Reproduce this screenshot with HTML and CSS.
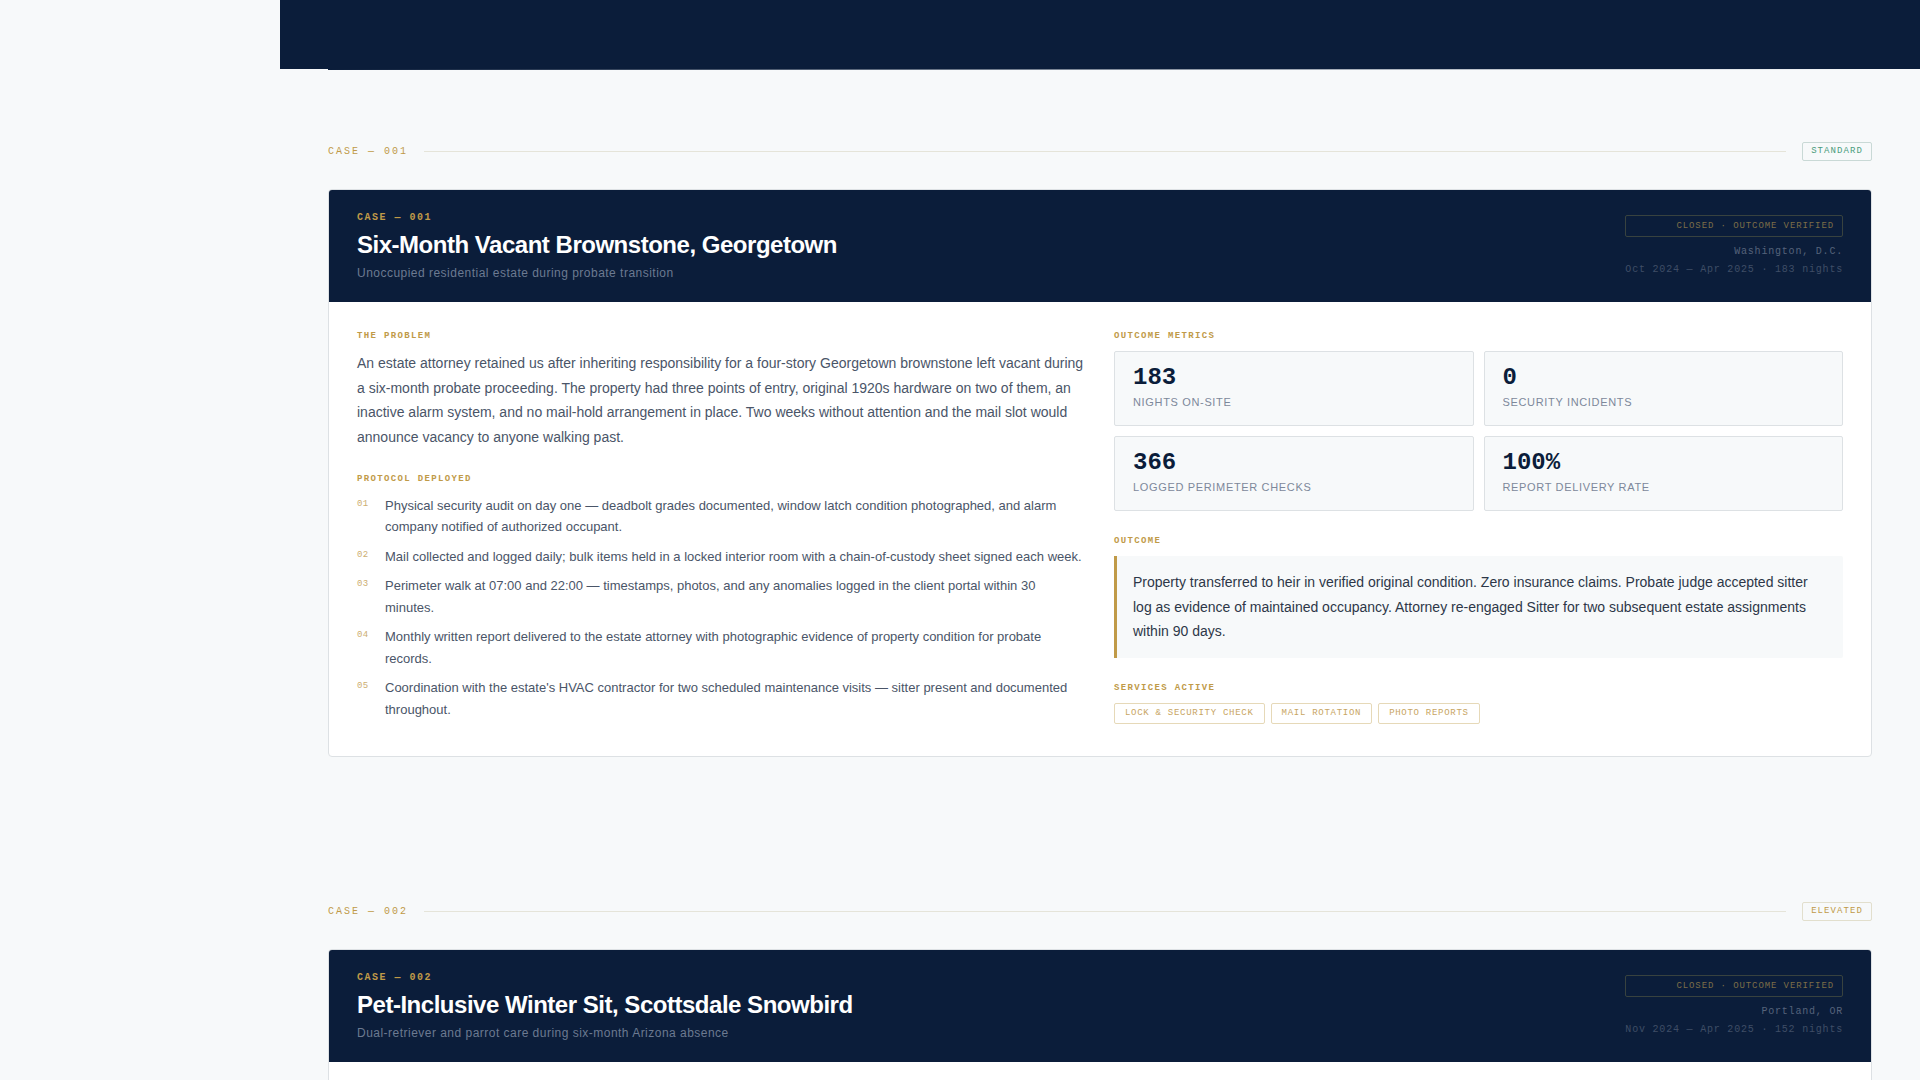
FILE: index.html
```html
<!DOCTYPE html>
<html lang="en">
<head>
<meta charset="utf-8">
<meta name="viewport" content="width=device-width, initial-scale=1">
<title>Case Files</title>
<link rel="stylesheet" href="styles.css">
</head>
<body>
<main class="page">
  <div class="hero"></div>

  <section class="case case-first">
    <div class="case-bar">
      <span class="case-index">CASE — 001</span>
      <span class="case-rule"></span>
      <span class="tier tier-standard">STANDARD</span>
    </div>
    <article class="card">
      <header class="card-head">
        <div class="card-intro">
          <p class="card-number">CASE — 001</p>
          <h2 class="card-title">Six-Month Vacant Brownstone, Georgetown</h2>
          <p class="card-sub">Unoccupied residential estate during probate transition</p>
        </div>
        <div class="card-meta">
          <p class="status">CLOSED · OUTCOME VERIFIED</p>
          <p class="place">Washington, D.C.</p>
          <p class="dates">Oct 2024 — Apr 2025 · 183 nights</p>
        </div>
      </header>
      <div class="card-body">
        <div class="column">
          <section class="block">
            <h3 class="label">THE PROBLEM</h3>
            <p class="problem">An estate attorney retained us after inheriting responsibility for a four-story Georgetown brownstone left vacant during a six-month probate proceeding. The property had three points of entry, original 1920s hardware on two of them, an inactive alarm system, and no mail-hold arrangement in place. Two weeks without attention and the mail slot would announce vacancy to anyone walking past.</p>
          </section>
          <section class="block">
            <h3 class="label">PROTOCOL DEPLOYED</h3>
            <ol class="steps">
              <li class="step"><span class="step-no">01</span><span>Physical security audit on day one — deadbolt grades documented, window latch condition photographed, and alarm company notified of authorized occupant.</span></li>
              <li class="step"><span class="step-no">02</span><span>Mail collected and logged daily; bulk items held in a locked interior room with a chain-of-custody sheet signed each week.</span></li>
              <li class="step"><span class="step-no">03</span><span>Perimeter walk at 07:00 and 22:00 — timestamps, photos, and any anomalies logged in the client portal within 30 minutes.</span></li>
              <li class="step"><span class="step-no">04</span><span>Monthly written report delivered to the estate attorney with photographic evidence of property condition for probate records.</span></li>
              <li class="step"><span class="step-no">05</span><span>Coordination with the estate's HVAC contractor for two scheduled maintenance visits — sitter present and documented throughout.</span></li>
            </ol>
          </section>
        </div>
        <div class="column">
          <section class="block">
            <h3 class="label">OUTCOME METRICS</h3>
            <dl class="metrics">
              <div class="metric"><dd class="metric-value">183</dd><dt class="metric-name">NIGHTS ON-SITE</dt></div>
              <div class="metric"><dd class="metric-value">0</dd><dt class="metric-name">SECURITY INCIDENTS</dt></div>
              <div class="metric"><dd class="metric-value">366</dd><dt class="metric-name">LOGGED PERIMETER CHECKS</dt></div>
              <div class="metric"><dd class="metric-value">100%</dd><dt class="metric-name">REPORT DELIVERY RATE</dt></div>
            </dl>
          </section>
          <section class="block">
            <h3 class="label">OUTCOME</h3>
            <p class="outcome">Property transferred to heir in verified original condition. Zero insurance claims. Probate judge accepted sitter log as evidence of maintained occupancy. Attorney re-engaged Sitter for two subsequent estate assignments within 90 days.</p>
          </section>
          <section class="block">
            <h3 class="label">SERVICES ACTIVE</h3>
            <ul class="services">
              <li class="service">LOCK &amp; SECURITY CHECK</li>
              <li class="service">MAIL ROTATION</li>
              <li class="service">PHOTO REPORTS</li>
            </ul>
          </section>
        </div>
      </div>
    </article>
  </section>

  <section class="case">
    <div class="case-bar">
      <span class="case-index">CASE — 002</span>
      <span class="case-rule"></span>
      <span class="tier tier-elevated">ELEVATED</span>
    </div>
    <article class="card">
      <header class="card-head">
        <div class="card-intro">
          <p class="card-number">CASE — 002</p>
          <h2 class="card-title">Pet-Inclusive Winter Sit, Scottsdale Snowbird</h2>
          <p class="card-sub">Dual-retriever and parrot care during six-month Arizona absence</p>
        </div>
        <div class="card-meta">
          <p class="status">CLOSED · OUTCOME VERIFIED</p>
          <p class="place">Portland, OR</p>
          <p class="dates">Nov 2024 — Apr 2025 · 152 nights</p>
        </div>
      </header>
      <div class="card-body"></div>
    </article>
  </section>
</main>
</body>
</html>
```
FILE: styles.css
```css
:root {
  --navy: #0b1d3a;
  --gold: #c09a48;
  --paper: #f7f9fa;
  --line: #dde1e4;
  --sans: "Liberation Sans", Arial, sans-serif;
  --mono: "Liberation Mono", "Courier New", monospace;
}

* { box-sizing: border-box; }

html { overflow: hidden; height: 100%; }

body {
  margin: 0;
  height: 100%;
  overflow: hidden;
  background: var(--paper);
  color: #4a5568;
  font-family: var(--sans);
}

h2, h3, p, dl, dd, ol, ul { margin: 0; padding: 0; }
ol, ul { list-style: none; }

.page { margin-left: 280px; }

.hero { height: 69px; background: var(--navy); }

.case {
  margin: 0 48px;
  padding: 72px 0;
  border-top: 1px solid transparent;
}

.case-first {
  border-image: linear-gradient(90deg, var(--navy), transparent) 1;
}

.case-bar {
  display: flex;
  align-items: center;
  gap: 16px;
  margin-bottom: 28px;
}

.case-index {
  color: var(--gold);
  font: 10px/13px var(--mono);
  letter-spacing: 0.2em;
}

.case-rule { flex: 1; height: 1px; background: #e5e4d9; }

.tier {
  padding: 3px 8px;
  border: 1px solid;
  border-radius: 2px;
  font: 9px/11px var(--mono);
  letter-spacing: 0.12em;
}

.tier-standard { color: #4a9c7c; border-color: #c9d9d6; }
.tier-elevated { color: var(--gold); border-color: #e2dfcd; }

.card {
  overflow: hidden;
  background: #fff;
  border: 1px solid var(--line);
  border-radius: 4px;
}

.card-head {
  display: flex;
  justify-content: space-between;
  gap: 24px;
  padding: 21px 28px 19px;
  min-height: 112px;
  background: var(--navy);
}

.card-number {
  color: var(--gold);
  font: bold 10px/14px var(--mono);
  letter-spacing: 0.15em;
}

.card-title {
  margin: 6px 0;
  color: #fff;
  font-size: 24px;
  line-height: 28px;
  letter-spacing: -0.02em;
}

.card-sub {
  color: #6c7a91;
  font-size: 12px;
  line-height: 16px;
  letter-spacing: 0.04em;
}

.card-meta {
  padding-top: 4px;
  color: #3f4d66;
  font: 10px/18px var(--mono);
  letter-spacing: 0.08em;
  text-align: right;
}

.status {
  margin-bottom: 6px;
  padding: 4px 8px;
  border: 1px solid #38423f;
  border-radius: 2px;
  color: #7c6d48;
  font-size: 9px;
  line-height: 12px;
  letter-spacing: 0.1em;
}

.place { color: #56637a; }

.card-body {
  display: grid;
  grid-template-columns: 1fr 1fr;
  gap: 28px;
  padding: 28px;
}

.column { display: flex; flex-direction: column; gap: 24px; }

.label {
  margin-bottom: 8px;
  color: var(--gold);
  font: bold 9px/13px var(--mono);
  letter-spacing: 0.15em;
}

.problem { font-size: 14px; line-height: 1.75; }

.steps { padding-top: 1px; }

.step {
  display: grid;
  grid-template-columns: 16px 1fr;
  gap: 12px;
  margin-bottom: 8px;
  font-size: 13px;
  line-height: 1.65;
}

.step-no {
  padding-top: 4px;
  color: #cdae70;
  font: 9px/11px var(--mono);
  letter-spacing: 0.05em;
}

.metrics { display: grid; grid-template-columns: 1fr 1fr; gap: 10px; }

.metric {
  padding: 14px 18px;
  background: var(--paper);
  border: 1px solid var(--line);
  border-radius: 2px;
}

.metric-value {
  margin-bottom: 3px;
  color: var(--navy);
  font: bold 24px/24px var(--mono);
}

.metric-name {
  color: #7d889b;
  font-size: 11px;
  line-height: 18px;
  letter-spacing: 0.06em;
}

.outcome {
  padding: 14px 16px;
  background: var(--paper);
  border-left: 3px solid var(--gold);
  border-radius: 0 2px 2px 0;
  color: #2d3748;
  font-size: 14px;
  line-height: 1.75;
}

.services { display: flex; flex-wrap: wrap; gap: 6px; }

.service {
  padding: 4px 10px;
  border: 1px solid #e6d9b8;
  border-radius: 2px;
  color: #c8a562;
  font: 9px/11px var(--mono);
  letter-spacing: 0.08em;
}
```
